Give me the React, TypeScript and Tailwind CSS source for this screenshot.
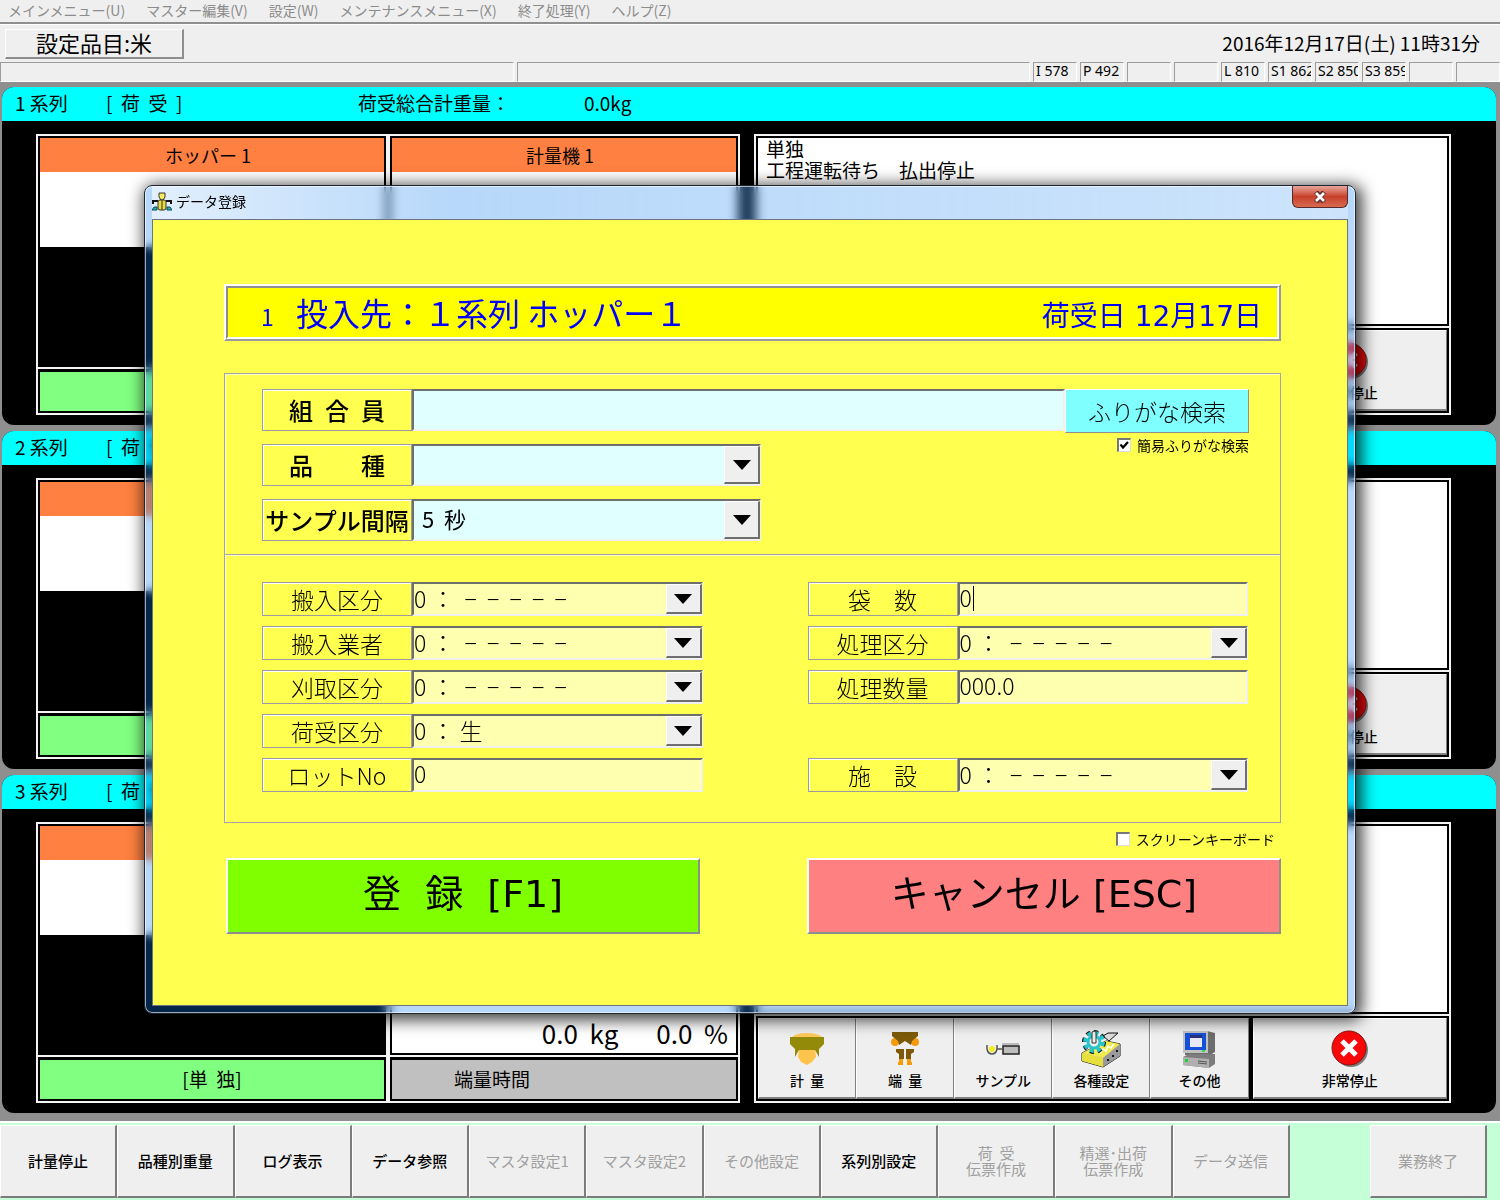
import { useState, type ReactNode } from 'react'
import clsx from 'clsx'

const menus = ['メインメニュー(U)', 'マスター編集(V)', '設定(W)', 'メンテナンスメニュー(X)', '終了処理(Y)', 'ヘルプ(Z)']

const statusCells = ['I 578', 'P 492', '', '', 'L 810', 'S1 862', 'S2 850', 'S3 859', '', '']

const footerButtons = [
  { label: '計量停止', enabled: true },
  { label: '品種別重量', enabled: true },
  { label: 'ログ表示', enabled: true },
  { label: 'データ参照', enabled: true },
  { label: 'マスタ設定1', enabled: false },
  { label: 'マスタ設定2', enabled: false },
  { label: 'その他設定', enabled: false },
  { label: '系列別設定', enabled: true },
  { label: '荷  受\n伝票作成', enabled: false },
  { label: '精選･出荷\n伝票作成', enabled: false },
  { label: 'データ送信', enabled: false },
]

// options collapse plain spaces, so these use non-breaking ones
const NB = '\u00a0'
const NONE = `0 ：${NB}${NB}` + Array(5).fill('−').join(NB + NB)

function WeighIcon() {
  return (
    <svg width="38" height="36" viewBox="0 0 38 36">
      <ellipse cx="19" cy="7" rx="15" ry="5" fill="#fdc95c" />
      <path d="M11 18h16l1 8-4 5-5 3-6-3-3-5z" fill="#fdc44c" />
      <path d="M2 6h34v7l-5 5v8l-4-7H11l-4 7v-8l-5-5z" fill="#948a0a" />
    </svg>
  )
}

function RemainderIcon() {
  return (
    <svg width="38" height="36" viewBox="0 0 38 36">
      <circle cx="9" cy="11" r="4" fill="#f79a0c" />
      <circle cx="29" cy="11" r="4" fill="#f79a0c" />
      <path d="M6 1h26v4l-6 5-1 4-6-4-6 4-1-4-6-5z" fill="#7c5a08" />
      <path d="M10 18h8v10h-5v-5l-3-2zM28 18h-8v10h5v-5l3-2z" fill="#7c5a08" />
      <path d="M13 28h4v6h-5v-3h1zM21 28h4v3h1v3h-5z" fill="#f79a0c" />
    </svg>
  )
}

function SampleIcon() {
  return (
    <svg width="38" height="36" viewBox="0 0 38 36">
      <circle cx="8" cy="18" r="3" fill="#f4ee1c" />
      <path d="M3 14v4q1 5 5 5t5-5v-4M13 18h5" fill="none" stroke="#555" strokeWidth="1.5" />
      <rect x="19" y="15" width="16" height="8" fill="#bdbdbd" stroke="#222" strokeWidth="1.5" />
      <path d="M18 13h17" stroke="#888" />
    </svg>
  )
}

function SettingsIcon() {
  return (
    <svg width="40" height="38" viewBox="0 0 40 38">
      <path d="M1 23l24-12 14 3v12L22 37 1 31z" fill="#b9b9b9" stroke="#111" />
      <path d="M1 23l24-12 14 3-17 14z" fill="#f1ea4d" />
      <path d="M1 23l21 5v9L1 31z" fill="#e6df3c" />
      <path d="M22 28l17-14v12L22 37z" fill="#9a9a9a" />
      <path d="M19 23l3-4 3 2 2-5 3 2 3-4" fill="none" stroke="#fff" strokeWidth="1.5" />
      <path d="M26 29h2v2h-2zM31 25h2v2h-2zM35 20h2v2h-2z" fill="#111" />
      <path d="M22 6l5-3h10l-9 8z" fill="#ddd" stroke="#111" />
      <circle cx="13" cy="12" r="10" fill="none" stroke="#111" strokeWidth="4" strokeDasharray="4 3.8" />
      <circle cx="13" cy="12" r="9" fill="none" stroke="#28c4cc" strokeWidth="4" strokeDasharray="4 3.1" />
      <circle cx="13" cy="12" r="6" fill="#efefef" stroke="#28c4cc" strokeWidth="3" />
      <path d="M11 2q2-2 4 0v11h-4z" fill="#eee" stroke="#333" />
    </svg>
  )
}

function ComputerIcon() {
  return (
    <svg width="36" height="38" viewBox="0 0 36 38">
      <path d="M26 1l8 2v19l-5 3H4V22h22z" fill="#6d6d6d" />
      <rect x="2" y="1" width="25" height="22" fill="#c2c2c2" />
      <rect x="4" y="3" width="21" height="17" fill="#1550d8" />
      <rect x="9" y="5" width="12" height="12" fill="#e8e8f4" />
      <rect x="9" y="5" width="12" height="3" fill="#28307c" />
      <rect x="21" y="20" width="3" height="2" fill="#35e24a" />
      <path d="M2 27l6-3h26v10l-6 4L2 35z" fill="#7d7d7d" />
      <path d="M2 27l26 2v9L2 35z" fill="#b0b0b0" />
      <path d="M17 31l9 1M17 33l9 1" stroke="#555" />
      <rect x="4" y="29" width="3" height="3" fill="#1fd43a" />
    </svg>
  )
}

function StopIcon() {
  return (
    <svg width="38" height="38" viewBox="0 0 38 38">
      <circle cx="20" cy="20" r="17" fill="#7c7c7c" />
      <circle cx="18" cy="18" r="17" fill="#f80808" stroke="#8e1010" />
      <path d="M11 11l14 14M25 11L11 25" stroke="#fff" strokeWidth="5" />
    </svg>
  )
}

function AppIcon() {
  return (
    <svg width="20" height="20" viewBox="0 0 20 20" className="shrink-0">
      <path d="M7 1h6v4l-2 3H9L7 5z" fill="#f7ec5a" stroke="#333" />
      <path d="M1 12V9h5M19 12V9h-5" fill="none" stroke="#111" strokeWidth="2" />
      <rect x="6" y="8" width="8" height="10" rx="2" fill="#e8da3a" stroke="#333" />
      <path d="M10 8v10" stroke="#333" />
      <path d="M0 18l2-3h3v3zM20 18l-2-3h-3v3z" fill="#1fb5b5" stroke="#145" />
    </svg>
  )
}

const tools = [
  { label: '計  量', icon: <WeighIcon /> },
  { label: '端  量', icon: <RemainderIcon /> },
  { label: 'サンプル', icon: <SampleIcon /> },
  { label: '各種設定', icon: <SettingsIcon /> },
  { label: 'その他', icon: <ComputerIcon /> },
]

function ToolButton({ label, icon, className }: { label: string; icon: ReactNode; className: string }) {
  return (
    <button
      className={clsx(
        'flex min-w-0 flex-col items-center justify-center gap-[2px] border-t border-l border-t-white border-l-white border-r border-b-2 border-r-[#808080] border-b-[#808080] bg-[#efefef] pt-1',
        className
      )}
    >
      <span className="flex h-[38px] items-center">{icon}</span>
      <span className="text-[14px] leading-5 font-medium whitespace-pre">{label}</span>
    </button>
  )
}

function LinePanel({ no }: { no: number }) {
  return (
    <section className="overflow-hidden rounded-xl bg-black">
      <header className="flex h-[34px] bg-[#00ffff] pl-[13px] text-[19px] leading-8 whitespace-pre">
        <span className="w-[91px]">{no} 系列</span>
        <span className="w-[252px]">[  荷  受  ]</span>
        <span className="w-[226px]">荷受総合計重量：</span>
        <span>0.0kg</span>
      </header>

      <div className="flex gap-[14px] pt-[13px] pr-[45px] pb-[10px] pl-[34px]">
        <div className="grid flex-[704] grid-cols-2">
          <div className="flex h-[235px] flex-col border-2 border-[#f4f4f4] p-[2px]">
            <h3 className="bg-[#ff8040] pr-2 text-center text-[18px] leading-[34px]">ホッパー 1</h3>
            <div className="h-[75px] bg-white" />
          </div>
          <div className="flex h-[235px] flex-col border-2 border-[#f4f4f4] p-[2px]">
            <h3 className="bg-[#ff8040] pr-2 text-center text-[18px] leading-[34px]">計量機 1</h3>
            <div className="flex flex-1 items-end justify-end gap-[38px] bg-white pr-[8px] text-[26px] leading-10 whitespace-pre">
              <span>0.0  kg</span>
              <span>0.0  %</span>
            </div>
          </div>
          <div className="flex h-[46px] border-2 border-t-0 border-[#f4f4f4] p-[2px] pt-[3px]">
            <div className="flex-1 bg-[#80ff80] text-center text-[19px] leading-[38px] whitespace-pre">[単  独]</div>
          </div>
          <div className="flex h-[46px] border-2 border-t-0 border-[#f4f4f4] p-[2px] pt-[3px]">
            <div className="flex-1 bg-[#c0c0c0] pl-[62px] text-[19px] leading-[38px]">端量時間</div>
          </div>
        </div>

        <div className="flex flex-[697] flex-col">
          <div className="flex h-[194px] border-2 border-[#f4f4f4] p-[2px]">
            <p className="flex-1 bg-white pl-2 text-[19px] leading-[21px] whitespace-pre-line">
              {'単独\n工程運転待ち　払出停止'}
            </p>
          </div>
          <div className="flex h-[87px] gap-1 border-2 border-t-0 border-[#f4f4f4] p-[2px]">
            <div className="flex flex-[492]">
              {tools.map((t) => (
                <ToolButton key={t.label} label={t.label} icon={t.icon} className="flex-1" />
              ))}
            </div>
            <ToolButton label="非常停止" icon={<StopIcon />} className="flex-[193]" />
          </div>
        </div>
      </div>
    </section>
  )
}

function FieldLabel({ id, big, children }: { id: string; big?: boolean; children: ReactNode }) {
  return (
    <label
      htmlFor={id}
      className={clsx(
        'flex w-[150px] shrink-0 items-center justify-center border border-[#9c9c9c] whitespace-pre shadow-[inset_1px_1px_0_#ffffff]',
        big ? 'text-[24px] leading-6 font-medium' : 'text-[23px] leading-6 font-light'
      )}
    >
      {children}
    </label>
  )
}

const fieldBox = 'border-t-2 border-l-2 border-r-2 border-b-2 border-t-[#6e6e6e] border-l-[#6e6e6e] border-r-[#f0f0f0] border-b-[#f0f0f0] outline-none'

function SelectField({ id, label, value, big }: { id: string; label: string; value: string; big?: boolean }) {
  return (
    <div className={clsx('flex', big ? 'h-[42px] w-[499px]' : 'h-[34px]')}>
      <FieldLabel id={id} big={big}>{label}</FieldLabel>
      <div className="relative flex flex-1">
        <select
          id={id}
          className={clsx(
            'w-full appearance-none',
            fieldBox,
            big ? 'bg-[#e0ffff] pb-1 pl-2 text-[22px]' : 'bg-[#ffffb0] pb-1 text-[23px] leading-7 font-light'
          )}
        >
          <option>{value}</option>
        </select>
        <span className="pointer-events-none absolute inset-y-[2px] right-[1px] flex w-[36px] items-center justify-center border-t border-l border-r-2 border-b-2 border-t-white border-l-white border-r-[#6e6e6e] border-b-[#6e6e6e] bg-[#efefef]">
          <svg width="18" height="10" viewBox="0 0 18 10">
            <path d="M0 0h18L9 10z" fill="#000" />
          </svg>
        </span>
      </div>
    </div>
  )
}

function TextField({ id, label, value, focus }: { id: string; label: string; value: string; focus?: boolean }) {
  return (
    <div className="flex h-[34px]">
      <FieldLabel id={id}>{label}</FieldLabel>
      <div className="relative flex min-w-0 flex-1">
        <input
          id={id}
          defaultValue={value}
          className={clsx('w-full bg-[#ffffb0] pb-1 text-[23px] leading-7 font-light', fieldBox)}
        />
        {focus && <span className="pointer-events-none absolute top-[4px] left-[15px] h-[25px] w-px bg-black" />}
      </div>
    </div>
  )
}

function CheckBox({ label, defaultOn }: { label: string; defaultOn: boolean }) {
  const [on, setOn] = useState(defaultOn)
  return (
    <label className="flex items-center gap-[6px] text-[14px] leading-5 whitespace-nowrap">
      <span className="relative flex">
        <input
          type="checkbox"
          checked={on}
          onChange={(e) => setOn(e.target.checked)}
          className="h-[14px] w-[14px] appearance-none border-t-2 border-l-2 border-r border-b border-t-[#777777] border-l-[#777777] border-r-[#dddddd] border-b-[#dddddd] bg-white"
        />
        {on && (
          <svg width="14" height="14" viewBox="0 0 14 14" className="pointer-events-none absolute inset-0">
            <path d="M3.5 6.5l2.5 3 5-5.5" fill="none" stroke="#000" strokeWidth="2.2" />
          </svg>
        )}
      </span>
      {label}
    </label>
  )
}

function EntryDialog() {
  return (
    <div
      role="dialog"
      aria-label="データ登録"
      className="w-full rounded-lg border border-[#1c2530] bg-[rgba(18,125,238,0.3)] px-[7px] pb-[7px] shadow-[inset_0_0_0_1px_rgba(255,255,255,0.6),3px_3px_16px_3px_rgba(0,0,0,0.75)] backdrop-blur-[4px]"
    >
      <div className="flex h-[33px] items-start justify-between bg-linear-to-r from-white/60 via-transparent via-25% to-white/30">
        <div className="flex h-[32px] items-center gap-1">
          <AppIcon />
          <h2 className="pb-[2px] text-[14px] leading-5">データ登録</h2>
        </div>
        <button
          aria-label="閉じる"
          className="flex h-[22px] w-[56px] items-center justify-center rounded-b-md border border-t-0 border-[#5a2a2a] bg-linear-to-b from-[#e8a49a] via-[#c8402c] via-50% to-[#d8694f]"
        >
          <svg width="14" height="12" viewBox="0 0 14 12">
            <path d="M3 1l8 10M11 1l-8 10" stroke="#5b2b2b" strokeWidth="5" />
            <path d="M3 2l8 8M11 2l-8 8" stroke="#fff" strokeWidth="2.8" />
          </svg>
        </button>
      </div>

      <form
        onSubmit={(e) => e.preventDefault()}
        className="border border-[#6b7480] bg-[#ffff50] pt-[64px] pr-[66px] pb-[71px] pl-[71px]"
      >
        <div className="border-2 border-t-white border-l-white border-r-[#9a9a9a] border-b-[#9a9a9a]">
          <div className="flex h-[53px] items-baseline border-2 border-t-[#8e8e8e] border-l-[#8e8e8e] border-r-white border-b-white bg-[#ffff00] pt-1 pr-[15px] pl-[33px] text-[#0000ff]">
            <span className="w-[35px] text-[23px] leading-8">1</span>
            <span className="flex-1 text-[32px] leading-10">投入先：１系列 ホッパー１</span>
            <span className="text-[28px] leading-10 [font-family:'DejaVu_Sans','Noto_Sans_CJK_JP',sans-serif]">荷受日 12月17日</span>
          </div>
        </div>

        <div className="mt-8 flex h-[182px] border border-[#a4a4a4] pt-[15px] pr-[31px] pl-[37px] shadow-[inset_1px_1px_0_#ffffc8]">
          <div className="flex flex-1 flex-col gap-[13px]">
            <div className="flex h-[42px]">
              <FieldLabel id="member" big>{'組\u2002合\u2002員'}</FieldLabel>
              <input id="member" className={clsx('min-w-0 flex-1 bg-[#e0ffff] px-2 text-[22px]', fieldBox)} />
            </div>
            <SelectField id="kind" label="品　　種" value="" big />
            <SelectField id="interval" label="サンプル間隔" value={`5${NB}${NB}秒`} big />
          </div>
          <div className="flex w-[184px] flex-col items-end gap-[2px]">
            <button
              type="button"
              className="h-[44px] w-full border border-t-white border-l-white border-r-[#8e8e8e] border-b-[#8e8e8e] bg-[#80ffff] text-[23px] leading-6 font-light"
            >
              ふりがな検索
            </button>
            <CheckBox label="簡易ふりがな検索" defaultOn />
          </div>
        </div>

        <div className="grid h-[268px] grid-cols-2 content-start gap-x-[105px] gap-y-[10px] border border-t-0 border-[#a4a4a4] pt-[27px] pr-[32px] pl-[37px] shadow-[inset_1px_1px_0_#ffffc8]">
          <SelectField id="carry" label="搬入区分" value={NONE} />
          <TextField id="bags" label="袋　数" value="0" focus />
          <SelectField id="carrier" label="搬入業者" value={NONE} />
          <SelectField id="process" label="処理区分" value={NONE} />
          <SelectField id="harvest" label="刈取区分" value={NONE} />
          <TextField id="amount" label="処理数量" value="000.0" />
          <SelectField id="receive" label="荷受区分" value={`0 ：${NB}生`} />
          <span />
          <TextField id="lot" label="ロットNo" value="0" />
          <SelectField id="facility" label="施　設" value={NONE} />
        </div>

        <div className="flex h-[35px] items-center justify-end pr-[6px] pb-1">
          <CheckBox label="スクリーンキーボード" defaultOn={false} />
        </div>

        <div className="flex gap-[107px] pl-[2px] text-[38px] leading-[68px] [font-family:'DejaVu_Sans','Noto_Sans_CJK_JP',sans-serif]">
          <button className="flex h-[76px] flex-1 justify-center border-2 border-t-white border-l-white border-r-[#8e8e8e] border-b-[#8e8e8e] bg-[#80ff00] whitespace-pre">
            登  録  [F1]
          </button>
          <button
            type="button"
            className="flex h-[76px] flex-1 justify-center border-2 border-t-white border-l-white border-r-[#8e8e8e] border-b-[#8e8e8e] bg-[#ff8080]"
          >
            キャンセル [ESC]
          </button>
        </div>
      </form>
    </div>
  )
}

export default function App() {
  return (
    <div className="relative flex min-h-screen flex-col bg-[#8f8f8f] text-black [font-family:'Noto_Sans_CJK_JP',sans-serif]">
      <nav className="flex h-[24px] items-start gap-[21px] border-b-2 border-[#8f8f8f] bg-[#efefef] pl-2 text-[14px] leading-5 text-[#8c8c8c]">
        {menus.map((m) => (
          <button key={m}>{m}</button>
        ))}
      </nav>

      <div className="flex h-[38px] items-center justify-between border-t border-white bg-[#efefef] pr-5 pl-[5px]">
        <button className="flex h-[30px] w-[179px] justify-center border-t border-l border-r-2 border-b-2 border-t-white border-l-white border-r-[#8e8e8e] border-b-[#8e8e8e] text-[22px] leading-6">
          設定品目:米
        </button>
        <time className="pb-[2px] text-[19px] leading-6">2016年12月17日(土) 11時31分</time>
      </div>

      <div className="flex h-[20px] gap-[3px] bg-[#efefef] text-[14px] leading-4 [font-family:'Noto_Sans',sans-serif]">
        <div className="flex-1 border border-t-[#9c9c9c] border-l-[#9c9c9c] border-r-white border-b-white" />
        <div className="flex-1 border border-t-[#9c9c9c] border-l-[#9c9c9c] border-r-white border-b-white" />
        {statusCells.map((s, i) => (
          <div
            key={i}
            className="w-[44px] overflow-hidden border border-t-[#9c9c9c] border-l-[#9c9c9c] border-r-white border-b-white pl-[2px] whitespace-nowrap"
          >
            {s}
          </div>
        ))}
      </div>

      <main className="flex flex-col gap-[6px] pt-[5px] pr-1 pb-2 pl-[2px]">
        <LinePanel no={1} />
        <LinePanel no={2} />
        <LinePanel no={3} />
      </main>

      <footer className="flex flex-1 border-t-2 border-white bg-[#c4ffd8] pt-[2px] pr-[13px] pb-[2px]">
        {footerButtons.map((b) => (
          <button
            key={b.label}
            disabled={!b.enabled}
            className={clsx(
              'flex min-h-[73px] flex-[117] items-center justify-center border-t border-l border-r-2 border-b-2 border-t-white border-l-white border-r-[#7c7c7c] border-b-[#7c7c7c] bg-[#efefef] text-center text-[15px] leading-4 whitespace-pre',
              b.enabled ? 'font-medium' : 'text-[#a0a0a0]'
            )}
          >
            {b.label}
          </button>
        ))}
        <div className="flex-[82]" />
        <button
          disabled
          className="flex min-h-[73px] flex-[117] items-center justify-center border-t border-l border-r-2 border-b-2 border-t-white border-l-white border-r-[#7c7c7c] border-b-[#7c7c7c] bg-[#efefef] text-[15px] leading-4 text-[#a0a0a0]"
        >
          業務終了
        </button>
      </footer>

      <div className="absolute inset-x-0 top-[185px] px-[144px]">
        <EntryDialog />
      </div>
    </div>
  )
}
